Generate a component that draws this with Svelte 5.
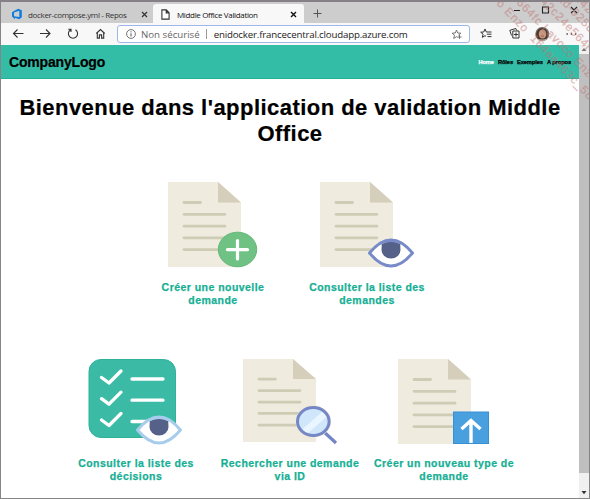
<script>
  const rows = [
    [
      { kind: 'plus', x: 32, h: 85, lines: ['Créer une nouvelle', 'demande'] },
      { kind: 'eye', x: 30, h: 85, lines: ['Consulter la liste des', 'demandes'] }
    ],
    [
      { kind: 'checks', x: 0, h: 85, lines: ['Consulter la liste des', 'décisions'] },
      { kind: 'search', x: 30, h: 83, lines: ['Rechercher une demande', 'via ID'] },
      { kind: 'upload', x: 31, h: 85, lines: ['Créer un nouveau type de', 'demande'] }
    ]
  ];
  const watermark = [
    { x: 496, y: 4, t: 'o Enzo  164aa463c_58' },
    { x: 516, y: 3, t: '664fc Lavoco Enzo' },
    { x: 540, y: 2, t: '42c24e564f' },
    { x: 557, y: -1, t: 'ad-925d' },
    { x: 574, y: -1, t: 'b42' }
  ];
</script>

{#snippet eye(cx, cy, stroke)}
  <g transform="translate({cx} {cy})">
    <path d="M-21.5 0Q0-26 21.5 0Q0 26-21.5 0Z" fill="#fff" stroke={stroke} stroke-width="3" stroke-linejoin="round" />
    <path d="M-9.2-9Q0-14 9.2-9L9.5-3A9.5 8.6 0 1 1-9.5-3Z" fill="#56618a" />
    <path d="M-10-10Q0-14.5 10-10" fill="none" stroke={stroke} stroke-width="2.6" />
  </g>
{/snippet}

<div class="window">
  <div class="tabs">
    <div class="tab first">
      <svg width="12" height="12" viewBox="0 0 12 12"><path d="M1 4.2 3.4 2.8 7.2.8l3.6 1.4v7L8.3 11.3 4 9.8v1.4L1 8.6ZM3 4.4v3.8l5.3.9V2.8Z" fill="#0f7bdc" fill-rule="evenodd" /></svg>
      <span class="t1">docker-compose.yml - Repos</span>
      <svg class="x" width="7" height="7" viewBox="0 0 7 7"><path d="M1 1 6 6M6 1 1 6" stroke="#333" stroke-width="1.2" /></svg>
    </div>
    <div class="tab active">
      <svg width="9" height="11" viewBox="0 0 9 11"><path d="M.9.9h4.4l2.8 2.9v6.3H.9ZM5.2.9v3h2.9" fill="#fff" stroke="#333" stroke-width="1.1" /></svg>
      <span class="t2">Middle Office Validation</span>
      <svg class="x" width="7" height="7" viewBox="0 0 7 7"><path d="M1 1 6 6M6 1 1 6" stroke="#111" stroke-width="1.4" /></svg>
    </div>
    <svg class="add" width="9" height="9" viewBox="0 0 9 9"><path d="M4.5.5v8M.5 4.5h8" stroke="#555" /></svg>
    <svg class="controls" width="66" height="10" viewBox="0 0 66 10" fill="none" stroke="#222" stroke-width="1.1"><path d="M1 5.5h6M29.5 2h6v6h-6ZM58 2l6 6M64 2l-6 6" /></svg>
  </div>

  <div class="toolbar">
    <svg class="nav" width="116" height="22" viewBox="0 0 116 22" fill="none" stroke="#333" stroke-width="1.1">
      <path d="M22.5 10.5H12.5M16.5 6.5l-4 4 4 4M39 10.5h10M45 6.5l4 4-4 4" />
      <path d="M69.5 6.8A4.6 4.6 0 1 0 74.5 6.8M67.3 6.2h2.7v2.7" />
      <path d="M95.3 10.5 99.5 6.5l4.2 4M96.3 10v5.1h2.1v-3.2h2.2v3.2h2.1V10" />
    </svg>
    <div class="address">
      <svg width="10" height="10" viewBox="0 0 10 10"><circle cx="5" cy="5" r="4.4" fill="none" stroke="#666" stroke-width=".9" /><path d="M5 4.3v3.2M5 2.3v1.1" stroke="#555" /></svg>
      <span class="unsafe">Non sécurisé</span>
      <i></i>
      <span class="url">enidocker.francecentral.cloudapp.azure.com</span>
      <svg class="star" width="11" height="11" viewBox="0 0 11 11"><path d="M5.5 1 6.7 4l3.2.2-2.5 2M5.5 1 4.3 4l-3.2.2 2.4 2-.8 3.3 2.8-1.8 1 .7M6.5 8h4M8.5 6v4" fill="none" stroke="#666" stroke-width=".9" /></svg>
    </div>
    <svg class="tools" width="117" height="22" viewBox="471 23 117 22" fill="none" stroke="#333">
      <path d="m486 29 1.3 3h5.2M486 29l-1.3 3-3 .2 2.4 2-.8 3.2 2.7-1.7 1 .6M487.8 34.2h4.7M488.5 36.6h4" />
      <path d="M512.5 35.5l-1.7-5.2 6-1.8 1 2M513.8 31h6.2v7h-6.2ZM515 34.5h4M517 32.5v4" />
      <circle cx="543.3" cy="34" r="7" fill="#746b60" stroke="none" />
      <path d="M537 36q1-8 6-8t6 7l-2 5h-7Z" fill="#463830" stroke="none" />
      <ellipse cx="543.5" cy="34" rx="3.8" ry="4.5" fill="#c9977f" stroke="none" />
      <path d="M538 38.5q5 2 10 0-1 2.5-5 2.5t-5-2.5Z" fill="#b9a195" stroke="none" />
      <path d="M542 35.8q1.5 1 3 0" stroke="#83503c" stroke-width=".8" />
      <path d="M567.5 34h1.3M571.8 34h1.3M576 34h1.3" stroke-width="1.3" />
    </svg>
  </div>

  <div class="view">
    <div class="page">
      <header>
        <strong>CompanyLogo</strong>
        <nav><a class="on" href="#home">Home</a><a href="#roles">Rôles</a><a href="#samples">Exemples</a><a href="#about">A propos</a></nav>
      </header>
      <h1>Bienvenue dans l'application de validation Middle<br />Office</h1>
      {#each rows as row, r}
        <div class="row r{r}">
          {#each row as c}
            <div class="card">
              <svg width="154" height="90" viewBox="0 0 154 90">
                {#if c.kind === 'checks'}
                  <rect x="30" y=".5" width="86.5" height="78" rx="12" fill="#3bbba5" stroke="#2fb19a" />
                  <g fill="none" stroke="#fff" stroke-width="3.3" stroke-linecap="round" stroke-linejoin="round">
                    {#each [0, 21.2, 42.5] as dy}
                      <path d="M42.5 {18.5 + dy}l7.5 5.5 12-12M73 {20 + dy}h31" />
                    {/each}
                  </g>
                  {@render eye(100, 71, '#a8cdec')}
                {:else}
                  <g transform="translate({c.x} 0) scale(1 {c.h / 85})">
                    <path d="M0 0h50l23 20.5V85H0Z" fill="#efebde" />
                    <path d="M50 0 73 20.5H50Z" fill="#d4cebb" />
                    <path d="M16 20.5h16.5M16 32.3h41M16 44.2h41M16 55.8h41M16 67.6h41" stroke="#ceccb5" stroke-width="2.8" stroke-linecap="round" />
                  </g>
                  {#if c.kind === 'plus'}
                    <ellipse cx="101.5" cy="67.5" rx="19.2" ry="17.3" fill="#70c284" stroke="#62b877" />
                    <path d="M91.5 67.7h20M101.5 58.5v18.5" stroke="#fff" stroke-width="3.2" stroke-linecap="round" />
                  {:else if c.kind === 'eye'}
                    {@render eye(101, 71, '#788bc8')}
                  {:else if c.kind === 'search'}
                    <path d="m110 72 13 12" stroke="#7385c5" stroke-width="3.2" />
                    <ellipse cx="100.3" cy="62.5" rx="17.8" ry="16" fill="#efe8d2" />
                    <ellipse cx="100.3" cy="62.5" rx="15.8" ry="14" fill="#d0e6fa" />
                    <path d="M88.5 71 109.5 52.5l4.5 5-20 17.5Z" fill="#e9f5ff" />
                    <ellipse cx="100.3" cy="62.5" rx="15.8" ry="14" fill="none" stroke="#7587c7" stroke-width="3" />
                  {:else}
                    <rect x="86.5" y="53" width="35" height="31.5" fill="#4aa0de" stroke="#3690d6" />
                    <path d="M104 84V61.5M94.5 70l9.5-8.5 9.5 8.5" fill="none" stroke="#fff" stroke-width="3.4" />
                  {/if}
                {/if}
              </svg>
              <p>{c.lines[0]}<br />{c.lines[1]}</p>
            </div>
          {/each}
        </div>
      {/each}
    </div>
    <div class="scroll">
      <svg width="10" height="9" viewBox="0 0 10 9"><path d="M2.5 6 5 3l2.5 3Z" fill="#777" /></svg>
      <div class="thumb"></div>
      <svg width="10" height="25" viewBox="0 0 10 25"><path d="M2.5 18h5L5 21.3Z" fill="#333" /></svg>
    </div>
  </div>
  <svg class="mark" width="590" height="110" viewBox="0 0 590 110">
    {#each watermark as w}
      <text transform="translate({w.x} {w.y}) rotate(46)">{w.t}</text>
    {/each}
  </svg>
</div>

<style>
  .window { position: relative; box-sizing: border-box; width: 590px; height: 499px; overflow: hidden; border: 1px solid #858585; border-top: 2px solid #858085; background: #fff; font-family: "Liberation Sans", sans-serif; display: flex; flex-direction: column; }
  svg { display: block; flex: none; }
  .tabs { height: 21px; flex: none; background: #cdcdcd; display: flex; align-items: center; }
  .tab { display: flex; align-items: center; box-sizing: border-box; white-space: nowrap; font: 8px "Open Sans", sans-serif; letter-spacing: -.34px; color: #333; }
  .first { width: 152px; padding: 3px 5px 0 10px; height: 21px; }
  .first .t1 { margin-left: 5px; }
  .active { width: 151px; height: 19px; margin-top: 2px; padding: 1px 7px 0 8px; background: #f8f8f8; border-radius: 3px 3px 0 0; color: #111; }
  .active .t2 { margin-left: 7px; }
  .x { margin-left: auto; }
  .add { margin: 2px 0 0 9px; }
  .controls { margin: -6px 10px 0 auto; }
  .toolbar { height: 22px; flex: none; background: #f8f8f8; display: flex; align-items: center; }
  .address { width: 353px; height: 18px; box-sizing: border-box; border: 1.5px solid #9db7ea; border-radius: 3px; background: #fff; display: flex; align-items: center; padding: 0 7px 0 8px; white-space: nowrap; font: 9.7px "Open Sans", sans-serif; }
  .unsafe { margin-left: 5px; color: #666; }
  .address i { width: 1px; height: 10px; background: #999; margin: 0 7px 0 6px; }
  .url { color: #222; letter-spacing: -.18px; }
  .star { margin-left: auto; }
  .view { flex: 1; display: flex; min-height: 0; }
  .page { width: 578px; }
  header { height: 34px; box-sizing: border-box; background: #33bda7; border-bottom: 1px solid #24b09a; display: flex; align-items: center; justify-content: space-between; padding: 0 8px; color: #000; }
  header strong { font-size: 14px; letter-spacing: -.17px; -webkit-text-stroke: .2px; }
  nav { display: flex; gap: 4px; font-weight: bold; font-size: 5.7px; letter-spacing: -.08px; -webkit-text-stroke: .25px; }
  nav a { color: #000; text-decoration: none; }
  nav .on { color: #fff; }
  h1 { margin: 16px 0 0; text-align: center; font-size: 22px; line-height: 26px; letter-spacing: .46px; color: #000; white-space: nowrap; -webkit-text-stroke: .2px; }
  .row { display: flex; justify-content: center; }
  .r0 { margin-top: 35px; }
  .r1 { margin-top: 52px; }
  .card { width: 154px; height: 125px; }
  .r1 .card { height: 120px; }
  .card p { margin: 9px 0 0; text-align: center; white-space: nowrap; font-weight: bold; font-size: 10.5px; line-height: 12.5px; letter-spacing: .46px; color: #16af94; -webkit-text-stroke: .25px; }
  .r1 p { margin-top: 8px; }
  .scroll { width: 10px; background: #f0f0f0; display: flex; flex-direction: column; }
  .thumb { flex: 1; background: #bfbfbf; }
  .mark { position: absolute; left: -1px; top: -2px; pointer-events: none; }
  .mark text { font: 11.5px "Liberation Sans", sans-serif; letter-spacing: .8px; fill: #b97878; fill-opacity: .42; stroke: #c87070; stroke-opacity: .25; stroke-width: .6px; white-space: pre; }
</style>
